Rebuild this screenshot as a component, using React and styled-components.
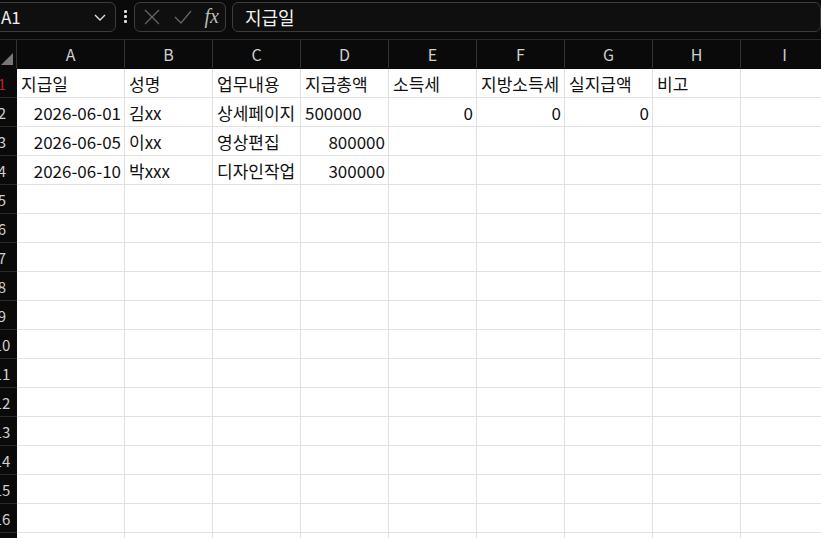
import React from 'react';
import styled, {createGlobalStyle} from 'styled-components';

const Global = createGlobalStyle`
    body { margin: 0; background: #0a0a0a; overflow: hidden; }
    * { box-sizing: border-box; }
`;

const cols = [
    {id: 'A', w: 108}, {id: 'B', w: 88}, {id: 'C', w: 88}, {id: 'D', w: 88},
    {id: 'E', w: 88}, {id: 'F', w: 88}, {id: 'G', w: 88}, {id: 'H', w: 88}, {id: 'I', w: 88},
];

const data = [
    [{t: '지급일'}, {t: '성명'}, {t: '업무내용'}, {t: '지급총액'}, {t: '소득세'}, {t: '지방소득세'}, {t: '실지급액'}, {t: '비고'}],
    [{t: '2026-06-01', r: 1}, {t: '김xx'}, {t: '상세페이지'}, {t: '500000'}, {t: '0', r: 1}, {t: '0', r: 1}, {t: '0', r: 1}],
    [{t: '2026-06-05', r: 1}, {t: '이xx'}, {t: '영상편집'}, {t: '800000', r: 1}],
    [{t: '2026-06-10', r: 1}, {t: '박xxx'}, {t: '디자인작업'}, {t: '300000', r: 1}],
];

const Page = styled.div`
    width: 834px;
    margin-left: -13px;
    font-family: "Noto Sans CJK KR", "Noto Sans", sans-serif;
`;

const Toolbar = styled.div`
    height: 40px;
    display: flex;
    align-items: center;
    gap: 6px;
    padding: 0 0 6px 0;
    border-bottom: 1px solid #2a2a2a;
`;

const Box = styled.div`
    height: 30px;
    border: 1px solid #3c3c3c;
    border-radius: 6px;
    background: #0f0f0f;
    display: flex;
    align-items: center;
    color: #f0f0f0;
    font-size: ${p => p.fs || 17}px;
    width: ${p => p.w}px;
    flex: ${p => (p.grow ? 1 : 'none')};
    padding: ${p => p.pad || '0 12px'};
    justify-content: ${p => p.justify || 'flex-start'};
`;

const Dots = styled.div`
    width: 6px;
    display: flex;
    flex-direction: column;
    gap: 2px;
    align-items: center;
    & > i { width: 3px; height: 3px; background: #ddd; border-radius: 1px; }
`;

const Fx = styled.span`
    font-family: "Liberation Serif", serif;
    font-style: italic;
    font-size: 20px;
    color: #bbb;
`;

const Grid = styled.div`
    display: grid;
    grid-template-columns: 30px ${cols.map(c => c.w + 'px').join(' ')};
    grid-auto-rows: 29px;
`;

const ColHead = styled.div`
    height: 28px;
    background: #0a0a0a;
    color: #cfcfcf;
    font-size: 16px;
    display: flex;
    align-items: center;
    justify-content: center;
    border-right: 1px solid #333;
`;

const Corner = styled(ColHead)`
    position: relative;
    & > b {
        position: absolute; right: 3px; bottom: 3px;
        border-left: 12px solid transparent;
        border-bottom: 12px solid #777;
    }
`;

const RowHead = styled.div`
    background: #0a0a0a;
    color: ${p => (p.sel ? '#b22' : '#cfcfcf')};
    font-size: 15px;
    display: flex;
    align-items: center;
    justify-content: center;
    border-bottom: 1px solid #2a2a2a;
`;

const Cell = styled.div`
    background: #fff;
    color: #111;
    font-size: 17px;
    border-right: 1px solid #e1e1e1;
    border-bottom: 1px solid #e1e1e1;
    display: flex;
    align-items: center;
    justify-content: ${p => (p.r ? 'flex-end' : 'flex-start')};
    padding: 0 3px 0 4px;
    white-space: nowrap;
    overflow: ${p => (p.clip ? 'hidden' : 'visible')};
    position: relative;
    z-index: ${p => p.z};
`;

const Txt = styled.span`
    background: ${p => (p.bg ? '#fff' : 'transparent')};
`;

const App = () => {
    const rows = [];
    for (let r = 0; r < 17; r++) {
        const row = data[r] || [];
        rows.push(<RowHead key={`h${r}`} sel={r === 0}>{r + 1}</RowHead>);
        cols.forEach((c, i) => {
            const cell = row[i] || {t: ''};
            const next = row[i + 1];
            const clip = !!(next && next.t);
            rows.push(
                <Cell key={`${r}-${c.id}`} r={cell.r} clip={clip} z={20 - i}>
                    <Txt bg={!clip}>{cell.t}</Txt>
                </Cell>
            );
        });
    }

    return (
        <Page>
            <Global />
            <Toolbar>
                <Box w={129} pad="0 8px 0 13px" justify="space-between">
                    <span>A1</span>
                    <svg width="14" height="14" viewBox="0 0 14 14"><path d="M2 5l5 5 5-5" fill="none" stroke="#ddd" strokeWidth="1.4" /></svg>
                </Box>
                <Dots><i /><i /><i /></Dots>
                <Box w={92} pad="0 6px 0 8px" justify="space-between">
                    <svg width="18" height="18" viewBox="0 0 18 18"><path d="M2 2l14 14M16 2L2 16" stroke="#666" strokeWidth="1.3" /></svg>
                    <svg width="20" height="18" viewBox="0 0 20 18"><path d="M2 9l6 6L18 3" fill="none" stroke="#666" strokeWidth="1.3" /></svg>
                    <Fx>fx</Fx>
                </Box>
                <Box grow fs={18}>지급일</Box>
            </Toolbar>
            <Grid>
                <Corner><b /></Corner>
                {cols.map(c => <ColHead key={c.id}>{c.id}</ColHead>)}
                {rows}
            </Grid>
        </Page>
    );
};

export default App;
